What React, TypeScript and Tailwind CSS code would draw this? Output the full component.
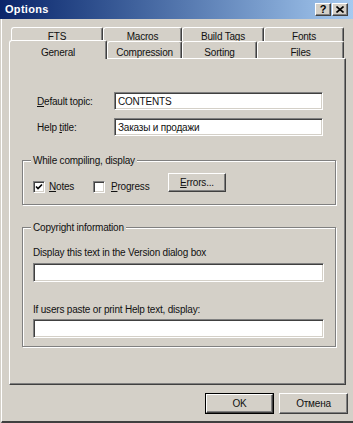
import React from "react";

const raised =
  "bg-[#d4d0c8] border border-t-white border-l-white border-r-[#404040] border-b-[#404040] shadow-[inset_-1px_-1px_0_#808080]";
const sunken =
  "bg-white border border-t-[#808080] border-l-[#808080] border-r-white border-b-white shadow-[inset_1px_1px_0_#404040,inset_-1px_-1px_0_#d4d0c8]";

function Tab({ label, w, selected }: { label: string; w: string; selected?: boolean }) {
  return (
    <div
      className={`${w} ${
        selected ? "h-[19px] -mb-px z-10 pt-[6px]" : "h-full pt-[5px]"
      } relative bg-[#d4d0c8] border-t border-l border-t-white border-l-white border-r border-r-[#404040] shadow-[inset_-1px_0_0_#808080] rounded-tl-[3px] rounded-tr-[2px] text-center leading-[12px]`}
    >
      {label}
    </div>
  );
}

function BackTab({ label, w }: { label: string; w: string }) {
  return (
    <div
      className={`${w} h-full pt-[3px] bg-[#d4d0c8] border-t border-l border-t-white border-l-white border-r border-r-[#404040] shadow-[inset_-1px_0_0_#808080] rounded-tl-[3px] rounded-tr-[2px] text-center leading-[12px]`}
    >
      {label}
    </div>
  );
}

function Check({ checked }: { checked?: boolean }) {
  return (
    <div className={`w-[12px] h-[12px] ${sunken} flex items-center justify-center`}>
      {checked && (
        <svg width="8" height="8" viewBox="0 0 8 8">
          <path d="M1 3.5 L3 5.5 L7 1.5" stroke="#000" strokeWidth="1.6" fill="none" />
        </svg>
      )}
    </div>
  );
}

function Group({ title, h, children }: { title: string; h: string; children: React.ReactNode }) {
  return (
    <div
      className={`relative ml-[12px] w-[314px] ${h} border border-[#808080] shadow-[inset_1px_1px_0_#fff,1px_1px_0_#fff]`}
    >
      <span className="absolute -top-[7px] left-[8px] px-[2px] bg-[#d4d0c8] leading-[13px]">
        {title}
      </span>
      {children}
    </div>
  );
}

export default function App() {
  return (
    <div className="w-[353px] h-[423px] bg-[#d4d0c8] flex flex-col overflow-hidden font-['Liberation_Sans',Arial,sans-serif] text-[10px] tracking-[-0.2px] text-[#111]">
      {/* Title bar */}
      <div className="h-[19px] shrink-0 flex items-center bg-gradient-to-r from-[#0a246a] to-[#a6caf0] pl-[5px] pr-[5px]">
        <span className="text-white font-bold text-[11px] tracking-[0.3px]">Options</span>
        <div className="ml-auto flex gap-[1px]">
          <div className={`w-[16px] h-[13px] ${raised} flex items-center justify-center text-[11px] font-bold leading-none text-black`}>
            ?
          </div>
          <div className={`w-[16px] h-[13px] ${raised} flex items-center justify-center`}>
            <svg width="8" height="7" viewBox="0 0 8 7">
              <path d="M0.5 0.5 L7.5 6.5 M7.5 0.5 L0.5 6.5" stroke="#000" strokeWidth="1.6" />
            </svg>
          </div>
        </div>
      </div>

      {/* Body */}
      <div className="flex-1 flex flex-col ml-[1px] border-l border-white border-b-2 border-b-[#404040]">
        <div className="h-[8px]" />
        {/* back tab row */}
        <div className="flex h-[14px] ml-[9px]">
          <BackTab label="FTS" w="w-[92px]" />
          <BackTab label="Macros" w="w-[79px]" />
          <BackTab label="Build Tags" w="w-[82px]" />
          <BackTab label="Fonts" w="w-[80px]" />
        </div>
        {/* front tab row */}
        <div className="flex items-end h-[17px] ml-[7px]">
          <Tab label="General" w="w-[98px]" selected />
          <Tab label="Compression" w="w-[75px]" />
          <Tab label="Sorting" w="w-[75px]" />
          <Tab label="Files" w="w-[87px]" />
        </div>

        {/* Panel */}
        <div className="ml-[7px] w-[337px] h-[327px] border-t border-l border-t-white border-l-white border-r border-b border-r-[#404040] border-b-[#404040] shadow-[inset_-1px_-1px_0_#808080] pt-[33px]">
          <div className="flex items-center pl-[27px]">
            <label className="w-[77px]">
              <u>D</u>efault topic:
            </label>
            <div className={`w-[209px] h-[18px] ${sunken} pl-[3px] flex items-center`}>CONTENTS</div>
          </div>
          <div className="flex items-center pl-[27px] mt-[8px]">
            <label className="w-[77px]">
              Help <u>t</u>itle:
            </label>
            <div className={`w-[209px] h-[18px] ${sunken} pl-[3px] flex items-center`}>
              Заказы и продажи
            </div>
          </div>

          <div className="mt-[24px]">
            <Group title="While compiling, display" h="h-[45px]">
              <div className="flex items-start pt-[12px] pl-[10px]">
                <div className="w-[60px] flex items-center gap-[4px] mt-[6px]">
                  <Check checked />
                  <span>
                    <u>N</u>otes
                  </span>
                </div>
                <div className="w-[75px] flex items-center gap-[6px] mt-[6px]">
                  <Check />
                  <span>
                    <u>P</u>rogress
                  </span>
                </div>
                <button className={`w-[58px] h-[19px] ${raised} flex items-center justify-center`}>
                  <span>
                    <u>E</u>rrors...
                  </span>
                </button>
              </div>
            </Group>
          </div>

          <div className="mt-[22px]">
            <Group title="Copyright information" h="h-[120px]">
              <div className="flex flex-col pt-[18px] pl-[10px]">
                <span className="leading-[13px]">Display this text in the Version dialog box</span>
                <div className={`mt-[4px] w-[291px] h-[19px] ${sunken}`} />
                <span className="leading-[13px] mt-[21px]">If users paste or print Help text, display:</span>
                <div className={`mt-[3px] w-[291px] h-[19px] ${sunken}`} />
              </div>
            </Group>
          </div>
        </div>

        {/* Buttons */}
        <div className="flex justify-end gap-[5px] pr-[5px] mt-[8px]">
          <button className="w-[69px] h-[21px] border border-black">
            <div className={`w-full h-full ${raised} flex items-center justify-center`}>OK</div>
          </button>
          <button className={`w-[69px] h-[21px] ${raised} flex items-center justify-center`}>Отмена</button>
        </div>
      </div>
    </div>
  );
}
